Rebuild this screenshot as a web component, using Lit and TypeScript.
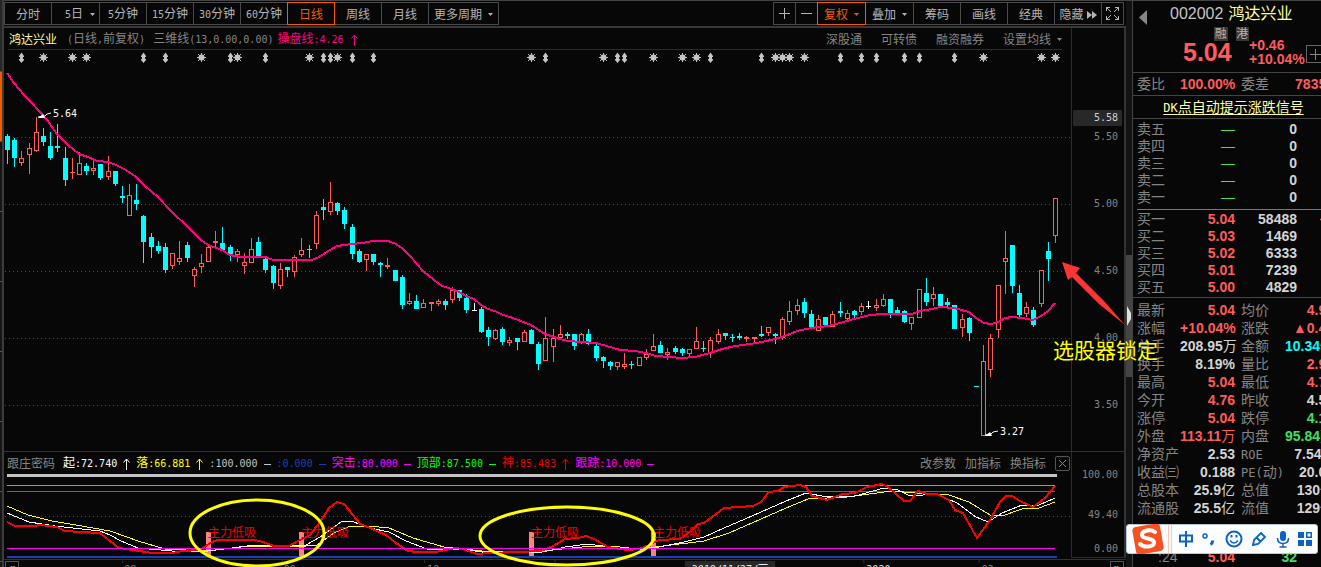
import { LitElement, html, svg, css } from "lit";
import { customElement } from "lit/decorators.js";
import { classMap } from "lit/directives/class-map.js";

type Kind = "r" | "c" | "w";
// x, high, low, body top, body bottom, kind
type Candle = [number, number, number, number, number, Kind];

const CANDLES: Candle[] = [
  [7,134,164,136,150,"c"],[14,138,167,140,158,"c"],[21,151,166,158,163,"r"],[29,143,174,148,155,"r"],
  [36,117,152,132,151,"r"],[43,128,146,136,142,"c"],[50,132,160,146,158,"c"],[57,124,152,146,148,"c"],
  [65,147,186,158,180,"c"],[72,158,179,172,173,"r"],[79,152,175,163,175,"r"],[86,163,175,166,171,"c"],
  [93,159,175,168,171,"r"],[100,164,180,164,178,"c"],[108,156,180,171,177,"r"],[115,171,186,171,184,"c"],
  [122,186,203,196,198,"c"],[129,184,216,195,216,"r"],[136,184,210,200,204,"c"],[143,215,263,216,242,"c"],
  [151,233,258,237,247,"c"],[158,241,254,246,251,"c"],[165,243,273,247,270,"c"],[172,253,269,253,266,"r"],
  [179,241,265,258,262,"r"],[187,242,262,245,258,"c"],[194,267,287,269,276,"r"],[201,254,273,263,267,"r"],
  [208,245,262,247,262,"r"],[215,231,248,241,243,"r"],[222,227,250,243,250,"c"],[230,245,261,247,254,"c"],
  [237,249,262,251,255,"r"],[244,253,274,262,266,"r"],[251,238,263,249,263,"r"],[258,237,256,242,256,"c"],
  [265,257,273,259,270,"c"],[273,265,289,266,283,"c"],[280,263,289,269,286,"r"],[287,267,277,267,270,"c"],
  [294,255,277,257,272,"r"],[301,238,257,250,255,"r"],[309,245,258,249,250,"c"],[316,211,249,215,244,"r"],
  [323,199,220,207,210,"c"],[330,182,215,202,212,"r"],[337,202,215,203,211,"c"],[344,207,229,210,224,"c"],
  [352,224,259,227,254,"c"],[359,249,263,251,262,"c"],[366,254,271,254,260,"r"],[373,254,265,254,262,"c"],
  [380,262,277,263,265,"c"],[387,258,269,265,267,"r"],[395,270,281,270,281,"c"],[402,275,309,277,305,"c"],
  [409,293,305,301,304,"r"],[416,295,309,301,309,"c"],[423,299,308,303,308,"r"],[431,302,311,302,304,"r"],
  [438,299,306,301,304,"r"],[445,299,310,301,305,"c"],[452,287,303,290,300,"r"],[459,290,301,290,298,"c"],
  [466,294,313,298,310,"c"],[474,303,311,310,311,"w"],[481,307,333,309,332,"c"],[488,327,346,330,337,"c"],
  [495,329,340,330,339,"r"],[502,327,345,329,342,"c"],[509,337,346,340,343,"r"],[517,338,350,338,342,"c"],
  [524,330,342,332,342,"r"],[531,329,344,330,344,"c"],[538,342,370,344,364,"c"],[545,317,361,338,361,"r"],
  [553,329,362,338,347,"r"],[560,325,338,334,338,"r"],[567,332,339,334,336,"c"],[574,334,350,334,346,"c"],
  [581,333,344,334,343,"r"],[588,329,345,334,344,"c"],[596,344,361,346,358,"c"],[603,356,368,357,361,"c"],
  [610,361,370,362,366,"c"],[617,362,370,362,367,"r"],[624,353,369,364,367,"r"],[631,361,369,364,365,"c"],
  [639,357,366,357,366,"r"],[646,349,360,354,358,"r"],[653,334,351,346,351,"r"],[660,341,353,345,353,"c"],
  [667,348,360,352,355,"r"],[675,346,354,348,352,"c"],[682,348,356,349,353,"c"],[689,349,357,349,354,"r"],
  [696,327,349,341,349,"r"],[703,341,352,348,349,"c"],[710,337,358,340,353,"r"],[718,329,344,334,342,"r"],
  [725,333,340,333,336,"c"],[732,334,342,337,338,"c"],[739,333,340,336,338,"c"],[746,336,342,337,339,"r"],
  [754,337,342,337,339,"r"],[761,326,337,334,336,"c"],[768,327,336,327,333,"r"],[775,333,344,334,336,"c"],
  [782,317,340,319,338,"r"],[789,301,325,311,322,"r"],[797,299,315,305,311,"r"],[804,298,318,302,313,"c"],
  [811,310,329,314,329,"c"],[818,315,331,319,331,"r"],[825,317,326,317,325,"c"],[832,311,327,314,327,"r"],
  [840,302,317,311,313,"c"],[847,310,321,313,319,"r"],[854,310,318,311,315,"c"],[861,303,315,306,312,"r"],
  [868,301,309,306,307,"w"],[876,299,311,305,308,"r"],[883,294,307,299,306,"r"],[890,299,318,299,314,"c"],
  [897,307,314,310,314,"c"],[904,310,323,311,322,"c"],[911,317,330,317,324,"r"],[919,289,318,289,318,"r"],
  [926,278,306,293,302,"c"],[933,287,306,294,299,"r"],[940,294,307,294,307,"c"],[947,298,309,302,305,"c"],
  [954,305,329,305,329,"c"],[962,314,337,319,328,"r"],[969,317,341,318,333,"c"],[976,386,387,386,387,"c"],
  [983,345,436,361,436,"r"],[990,334,377,338,370,"r"],[998,285,338,285,330,"r"],[1005,231,294,258,262,"r"],
  [1012,245,293,245,286,"c"],[1019,285,317,293,315,"c"],[1026,302,317,307,314,"r"],[1033,307,327,310,325,"c"],
  [1041,270,307,270,304,"r"],[1048,242,281,251,259,"c"],[1055,198,243,198,236,"r"],
];

const TREND =
  "7,73 14,83 24,95 30,101 40,112 47,120 57,134 68,145 79,154 88,157 97,161 108,162 116,165 126,170 136,177 145,186 158,197 172,212 187,226 201,240 208,245 222,250 230,255 240,257 265,257 273,260 312,260 319,257 330,250 337,246 344,245 362,243 373,241 388,241 396,244 403,249 410,256 423,271 434,280 442,286 452,289 459,292 466,296 474,299 481,305 488,309 495,311 503,315 513,318 531,325 545,334 560,339 568,341 582,342 596,343 610,347 620,350 635,351 646,353 656,356 670,357 682,358 695,357 710,353 722,349 735,346 750,344 762,342 775,339 785,336 797,331 811,328 828,326 840,323 854,319 870,315 882,314 912,314 920,311 932,309 940,307 954,308 969,312 976,318 984,323 991,324 998,322 1005,318 1012,317 1022,318 1033,320 1041,316 1048,311 1055,303";

const RED =
  "7,522 15,526 33,526 41,525 57,527 65,531 81,532 100,533 110,541 119,548 133,550 152,553 172,553 183,551 200,550 210,543 217,540 255,540 263,542 274,546 289,546 300,540 310,535 320,522 329,508 337,502 344,504 353,515 360,524 368,527 377,531 386,535 396,543 408,551 417,552 436,552 455,548 463,549 477,554 489,553 517,552 541,551 553,546 565,539 578,538 586,536 594,539 608,547 627,550 639,549 649,545 659,540 680,539 692,530 698,524 704,523 724,508 753,506 761,502 769,492 778,491 784,487 800,485 806,487 812,496 827,500 843,494 855,493 867,487 882,484 888,487 904,501 910,501 918,491 927,494 937,494 949,500 955,510 963,513 977,538 990,520 1000,502 1006,496 1012,496 1020,501 1033,507 1045,498 1055,486";
const WHITE =
  "7,513 29,522 55,526 100,531 110,535 121,541 138,548 172,551 200,552 224,549 255,545 286,546 306,545 320,537 341,522 351,521 370,528 389,532 406,541 427,549 461,549 489,553 543,552 565,547 588,544 610,547 635,550 659,547 684,542 704,537 724,528 745,519 761,512 786,501 806,493 827,497 855,496 884,488 898,490 910,496 937,494 957,503 976,517 988,522 1002,513 1022,505 1039,505 1055,498";
const YELLOW =
  "7,506 28,515 52,521 76,525 110,531 138,541 165,549 207,551 241,547 269,546 296,547 317,545 334,533 348,527 368,526 389,528 413,538 444,547 482,551 543,551 582,547 610,546 639,549 663,546 704,541 729,533 761,519 786,508 808,499 847,497 892,491 916,493 949,495 969,502 990,515 1002,516 1022,509 1039,508 1055,502";

const STARS = [43,72,86,201,237,309,337,531,603,653,682,696,775,782,789,804,983,1041,1055];
const DIAMONDS = [21,143,165,230,265,323,330,352,373,545,617,624,710,761,840,861,876,904,919,954];

/** Sets runs of half-width characters in the narrow monospace face. */
const mixed = (text: string) =>
  text
    .split(/([\x20-\x7e]+)/)
    .filter((part) => part)
    .map((part) => (/^[\x20-\x7e]/.test(part) ? html`<span class="n">${part}</span>` : part));

/** Keeps a trailing unit such as 万 in the regular weight. */
const amount = (text: string) => {
  const m = /^(.*?)([万亿]?)$/.exec(text)!;
  return html`${m[1]}<span class="unit">${m[2]}</span>`;
};

const base = css`
  * { box-sizing: border-box; }
  .n { font-family: "DejaVu Sans Mono", "Liberation Mono", monospace; font-size: var(--half, 10px); }
  svg { display: block; }
  button {
    margin: 0; padding: 0; border: 0; background: none; color: inherit;
    font: inherit; white-space: nowrap; cursor: pointer;
  }
  .caret { width: 5px; height: 3px; fill: currentColor; }
`;

const caret = html`<svg class="caret" viewBox="0 0 5 3"><path d="M0 0h5L2.5 3z" /></svg>`;

@customElement("top-toolbar")
class TopToolbar extends LitElement {
  static styles = [base, css`
    :host {
      display: flex; justify-content: space-between; height: 28px; padding: 1px 2px 1px 0;
      border-top: 1px solid #444; border-bottom: 2px solid #383838; color: #b4b4b4;
    }
    .group { display: flex; }
    button {
      display: flex; align-items: center; justify-content: center; gap: 6px;
      width: 48px; height: 23px; margin-right: -1px; padding-top: 2px; border: 1px solid #4a4a4a;
    }
    .group > :last-child { margin-right: 0; }
    .drop { width: 49px; }
    .day { gap: 7px; padding-left: 9px; }
    .more { width: 71px; }
    .small { width: 23px; padding-top: 0; }
    .hide { gap: 3px; }
    .active { border-color: #f85a00; color: #f85a00; z-index: 1; }
    .line { fill: none; stroke: currentColor; shape-rendering: crispEdges; }
    .fill { fill: currentColor; }
  `];
  render() {
    const periods = ["15分钟", "30分钟", "60分钟", "日线", "周线", "月线"];
    return html`
      <div class="group">
        <button>分时</button>
        <button class="drop day"><span>${mixed("5日")}</span>${caret}</button>
        <button><span>${mixed("5分钟")}</span></button>
        ${periods.map((p) => html`<button class=${classMap({ active: p === "日线" })}><span>${mixed(p)}</span></button>`)}
        <button class="more">更多周期${caret}</button>
      </div>
      <div class="group">
        <button class="small" aria-label="放大"><svg class="line" width="11" height="11"><path d="M0 5.5H11M5.5 0V11" /></svg></button>
        <button class="small" aria-label="缩小"><svg class="line" width="11" height="11"><path d="M0 5.5H11" /></svg></button>
        <button class="drop active">复权${caret}</button>
        <button class="drop">叠加${caret}</button>
        <button>筹码</button><button>画线</button><button>经典</button>
        <button class="hide">隐藏<svg class="fill" width="10" height="8"><path d="M0 0L5 4L0 8zM5 0L10 4L5 8z" /></svg></button>
        <button class="small" aria-label="全屏"><svg class="line" width="13" height="13"><path d="M.5 4V.5H4M9 .5H12.500V4M.5 9V12.500H4M9 12.500H12.500V9M1 1L5 5M12 1L8 5M1 12L5 8M12 12L8 8" /></svg></button>
      </div>`;
  }
}

@customElement("price-chart")
class PriceChart extends LitElement {
  static styles = [base, css`
    :host { display: grid; grid-template-columns: minmax(0, 1fr) 55px; height: 423px; }
    .info {
      display: flex; align-items: center; gap: 10px; height: 22px; margin: 0 9px 0 4px; padding: 2px 0 0 1px;
      border-bottom: 1px solid #2c2c2c; color: #858585;
    }
    .info .name { color: #ffffa0; }
    .info .param { margin-right: -6px; margin-left: -2px; }
    .trend { color: #ff0080; display: flex; align-items: center; gap: 7px; }
    .links { display: flex; gap: 19px; margin-left: auto; }
    .links button { display: flex; align-items: center; gap: 6px; }
    .plot { width: 100%; height: 401px; }
    .axis {
      display: flex; flex-direction: column; gap: 53px; padding-top: 82px;
      border-left: 1px solid #2c2c2c; border-right: 2px solid #333; color: #858585;
      text-align: right; line-height: 14px;
    }
    .axis span { padding-right: 6px; }
    .first { display: flex; flex-direction: column; gap: 4px; }
    .axis .tag { margin: 0 2px 0 1px; padding-right: 4px; line-height: 16px; background: #282828; color: #d0d0d0; border-radius: 1px; }
    .crisp { shape-rendering: crispEdges; }
    .grid { stroke: #4c4c4c; stroke-dasharray: 1 3; fill: none; }
    .r { fill: #070707; stroke: #ff5c5c; }
    .c { fill: #00ffff; stroke: #00ffff; }
    .w { fill: #fff; stroke: #fff; }
    .ma { fill: none; stroke: #ff0080; stroke-width: 2; stroke-linejoin: round; shape-rendering: crispEdges; }
    .note { fill: #fff; }
    .leader { stroke: #fff; fill: none; }
    .event { fill: #c4c4c4; }
    .ray { stroke: #c4c4c4; fill: none; }
  `];
  private candle([x, hi, lo, top, bottom, kind]: Candle) {
    const cx = x + 0.5;
    return svg`<g class=${kind}>
      <path d="M${cx} ${hi}V${lo}" />
      <rect x=${x - 1.5} y=${top + 0.5} width="4" height=${Math.max(bottom - top - 1, 0.01)} />
    </g>`;
  }
  render() {
    return html`
      <div>
        <div class="info">
          <span class="name">鸿达兴业</span>
          <span>${mixed("(日线,前复权)")}</span>
          <span class="param">${mixed("三维线(13,0.00,0.00)")}</span>
          <span class="trend"><span>${mixed("操盘线:4.26")}</span>
            <svg width="7" height="12" fill="none" stroke="currentColor"><path d="M3.5 12V1M.5 4.500L3.500 1L6.500 4.500" /></svg>
          </span>
          <div class="links">
            <button>深股通</button><button>可转债</button><button>融资融券</button><button>设置均线${caret}</button>
          </div>
        </div>
        <svg class="plot" viewBox="4 50 1067 401" preserveAspectRatio="none">
          ${DIAMONDS.map((x) => svg`<path class="event" d="M${x + 0.5} 52.500L${x + 3} 56V57H${x + 2}V59H${x + 3}V60L${x + 0.5} 63L${x - 2} 60V59H${x - 1}V57H${x - 2}V56z" />`)}
          ${STARS.map((x) => svg`<circle class="event" cx=${x + 0.5} cy="57.500" r="3" />
            <path class="ray" d="M${x - 4} 57.500H${x + 5}M${x + 0.5} 53V62M${x - 3} 54L${x + 4} 61M${x + 4} 54L${x - 3} 61" />`)}
          <g class="crisp">
            ${[137, 204, 271, 338, 405].map((y) => svg`<path class="grid" d="M5 ${y + 0.5}H1071" />`)}
            ${CANDLES.map((c) => this.candle(c))}
          </g>
          <polyline class="ma" points=${TREND} />
          <path class="leader" d="M38 117L45 116L47 114L51 113M985 435L991 434L993 432L998 431" />
          <path class="note" d="M38 118L43 114L45 118zM985 436L990 432L992 436z" />
          <text class="note n" x="53" y="117">5.64</text>
          <text class="note n" x="1000" y="435">3.27</text>
        </svg>
      </div>
      <div class="axis">
        <div class="first"><span class="tag n">5.58</span><span class="n">5.50</span></div>
        ${["5.00", "4.50", "4.00", "3.50"].map((v) => html`<span class="n">${v}</span>`)}
      </div>`;
  }
}

@customElement("indicator-chart")
class IndicatorChart extends LitElement {
  static styles = [base, css`
    :host { display: block; }
    .pane { display: grid; grid-template-columns: minmax(0, 1fr) 55px; height: 108px; border-top: 1px solid #333; }
    .legend { display: flex; align-items: center; gap: 6px; height: 22px; padding: 1px 1px 0 3px; }
    .legend svg { width: 7px; height: 12px; fill: none; stroke: currentColor; }
    .item { display: flex; align-items: center; gap: 6px; }
    .title { margin-right: 2px; color: #858585; }
    .white { color: #fff; } .yellow { color: #ff0; } .grey { color: #c4c4c4; } .blue { color: #1440c0; }
    .magenta { color: #f0f; } .green { color: #0f0; } .red { color: #f00000; }
    .tools { display: flex; align-items: center; gap: 9px; margin-left: auto; color: #858585; }
    .tools .close { width: 15px; height: 15px; display: grid; place-items: center; border: 1px solid #555; border-radius: 2px; }
    .tools .close svg { width: 9px; height: 9px; }
    .plot { width: 100%; height: 85px; overflow: visible; position: relative; z-index: 1; }
    .axis {
      display: flex; flex-direction: column; height: 106px; padding: 16px 6px 0 0; line-height: 14px; text-align: right;
      border-left: 1px solid #2c2c2c; border-right: 2px solid #333; border-bottom: 1px solid #2c2c2c; color: #858585;
    }
    .mid { margin: 26px 0 20px; }
    .crisp { shape-rendering: crispEdges; }
    .curve { fill: none; }
    .signal { fill: #f00000; font-size: 12px; }
    .bar { fill: #ff8080; }
    .dates { display: flex; position: relative; justify-content: space-between; height: 24px; border-top: 1px solid #333; color: #858585; }
    .dates button { width: 14px; height: 14px; margin: 1px 2px 0 1px; border: 1px solid #555; line-height: 10px; color: #c4c4c4; }
    .scale { flex: 1; height: 24px; min-width: 0; }
    .scale text { fill: #858585; }
    .scale .year { fill: #e8e8e8; }
    .tick { stroke: #333; }
  `];
  private item(color: string, text: string, up: boolean) {
    return html`<span class="item ${color}"><span>${mixed(text)}</span>
      <svg>${up ? svg`<path d="M3.5 12V1M.5 4.500L3.500 1L6.500 4.500" />` : svg`<path d="M0 6.500H7" />`}</svg></span>`;
  }
  render() {
    return html`
      <div class="pane">
        <div>
          <div class="legend">
            <span class="title">跟庄密码</span>
            ${this.item("white", "起:72.740", true)} ${this.item("yellow", "落:66.881", true)}
            ${this.item("grey", ":100.000", false)} ${this.item("blue", ":0.000", false)}
            ${this.item("magenta", "突击:80.000", false)} ${this.item("green", "顶部:87.500", false)}
            ${this.item("red", "神:85.483", true)} ${this.item("magenta", "跟踪:10.000", false)}
            <div class="tools">
              <button>改参数</button><button>加指标</button><button>换指标</button>
              <button class="close" aria-label="关闭"><svg><path d="M1 1L8 8M8 1L1 8" /></svg></button>
            </div>
          </div>
          <svg class="plot" viewBox="4 474 1067 85" preserveAspectRatio="none">
            <g class="crisp curve">
              <path stroke="#4c4c4c" stroke-dasharray="1 3" d="M5 516.500H1071" />
              <path stroke="#c4c4c4" stroke-width="3" d="M7 475.500H1057" />
              <path stroke="#00ff00" d="M7 485.500H1055" />
              <path stroke="#ff00ff" d="M7 491.500H1055" />
            </g>
            ${[206, 299, 529, 651].map((x) => svg`<rect class="bar" x=${x} y="532" width="5" height="24" />`)}
            <g class="crisp curve">
              <polyline stroke="#ffff00" points=${YELLOW} />
              <polyline stroke="#ffffff" points=${WHITE} />
              <polyline stroke="#ff0000" stroke-width="2" points=${RED} />
            </g>
            <g class="crisp curve">
              <path stroke="#ff00ff" d="M7 548.500H1055" />
              <path stroke="#1440c0" stroke-width="2" d="M7 557H1057" />
            </g>
            ${[208, 301, 531, 653].map((x) => svg`<text class="signal" x=${x} y="537">主力低吸</text>`)}
            <g class="curve" stroke="#ffff00" stroke-width="3">
              <ellipse cx="257" cy="533" rx="67" ry="33" />
              <ellipse cx="567" cy="536" rx="87" ry="29" />
            </g>
          </svg>
        </div>
        <div class="axis"><span class="n">100.00</span><span class="n mid">49.40</span><span class="n">0.00</span></div>
      </div>
      <div class="dates">
        <button aria-label="向前">«</button>
        <svg class="scale" viewBox="21 560 1085 24" preserveAspectRatio="none">
          <path class="tick" d="M122.500 560v3M281.500 560v3M423.500 560v3M553.500 560v3M703.500 560v3M861.500 560v3M976.500 560v3" />
          <rect x="683" y="561" width="90" height="16" fill="#282828" />
          <text class="n" x="124" y="573">08</text><text class="n" x="283" y="573">09</text><text class="n" x="426" y="573">10</text>
          <text class="n year" x="690" y="573">2019/11/27/</text><text class="year" x="755" y="574">三</text>
          <text class="n year" x="864" y="573">2020</text><text class="n" x="979" y="573">02</text>
        </svg>
        <button aria-label="向后">»</button>
      </div>`;
  }
}

@customElement("quote-panel")
class QuotePanel extends LitElement {
  static styles = [base, css`
    :host {
      display: block; overflow: hidden; border-left: 1px solid #444; --half: 12px;
      font-size: 14px; color: #858585;
    }
    .n { line-height: 1; }
    .inner { width: 201px; }
    .head { height: 72px; border-top: 1px solid #444; }
    .title { display: flex; align-items: center; height: 25px; padding-left: 6px; font-size: 16px; color: #c4c4c4; }
    .title button { margin: 8px 23px 0 0; }
    .title span { margin-left: 5px; color: #ffffa0; }
    .quote { display: grid; grid-template-columns: 66px 57px auto; justify-content: start; padding-left: 50px; color: #ff5c5c; font-weight: bold; }
    .tags { display: flex; gap: 8px; padding: 1px 0 0 31px; }
    .tags span { width: 14px; background: #363636; color: #b4b4b4; font-size: 12px; font-weight: normal; line-height: 14px; text-align: center; }
    .last { font-size: 25px; line-height: 22px; }
    .change { padding-top: 12px; line-height: 14px; }
    .add { width: 18px; height: 18px; margin-top: 19px; border: 1px solid #666; display: grid; place-items: center; color: #858585; }
    table { width: 100%; border-collapse: collapse; table-layout: fixed; }
    td, th { padding: 0; font-weight: normal; text-align: left; white-space: nowrap; line-height: 17px; }
    td { text-align: right; font-weight: bold; color: #d4d4d4; }
    th { padding-left: 4px; }
    .unit { font-weight: normal; }
    .ratio { border-top: 1px solid #444; border-bottom: 1px solid #444; }
    .ratio th, .ratio td { line-height: 22px; }
    .tip { height: 23px; border-bottom: 1px solid #444; line-height: 22px; text-align: center; }
    .tip a { color: #ffffa0; text-underline-offset: 2px; }
    .sell { padding: 2px 0 3px; }
    .buy { margin-left: 4px; padding-top: 1px; border-top: 1px solid #777; }
    .buy table { margin-left: -4px; width: 201px; }
    .stats { margin-top: 1px; padding-top: 3px; border-top: 1px solid #444; }
    .stats td, .stats th { line-height: 18px; }
    .red { color: #ff5c5c; } .green { color: #40e060; } .cyan { color: #00ffff; }
    .c1 { width: 53px; } .c2 { width: 49px; } .c3 { width: 62px; } .c4 { width: 37px; }
    .s1 { width: 47px; } .s2 { width: 55px; } .s3 { width: 44px; } .s4 { width: 55px; }
    .stats th:nth-child(3), .ratio th:nth-child(3) { padding-left: 6px; }
    .ticks { padding-top: 32px; }
    .ticks th { padding-left: 25px; }
  `];
  render() {
    const stats: [string, string, string, string, string, string][] = [
      ["最新", "5.04", "red", "均价", "4.95", "red"],
      ["涨幅", "+10.04%", "red", "涨跌", "▲0.46", "red"],
      ["总手", "208.95万", "", "金额", "10.34亿", "cyan"],
      ["换手", "8.19%", "", "量比", "2.95", "red"],
      ["最高", "5.04", "red", "最低", "4.73", "red"],
      ["今开", "4.76", "red", "昨收", "4.58", ""],
      ["涨停", "5.04", "red", "跌停", "4.12", "green"],
      ["外盘", "113.11万", "red", "内盘", "95.84万", "green"],
      ["净资产", "2.53", "", "ROE", "7.54%", ""],
      ["收益㈢", "0.188", "", "PE(动)", "20.06", ""],
      ["总股本", "25.9亿", "", "总值", "130亿", ""],
      ["流通股", "25.5亿", "", "流值", "129亿", ""],
    ];
    const bids = [["买一", "5.04", "58488", "—"], ["买二", "5.03", "1469", ""], ["买三", "5.02", "6333", ""], ["买四", "5.01", "7239", ""], ["买五", "5.00", "4829", ""]];
    const book = html`<colgroup><col class="c1" /><col class="c2" /><col class="c3" /><col class="c4" /></colgroup>`;
    const pairs = html`<colgroup><col class="s1" /><col class="s2" /><col class="s3" /><col class="s4" /></colgroup>`;
    return html`<div class="inner">
      <div class="head">
        <div class="title">
          <button aria-label="返回"><svg width="8" height="15"><path fill="#858585" d="M8 0V15L0 7.500z" /></svg></button>
          002002<span>鸿达兴业</span>
        </div>
        <div class="quote">
          <div><div class="tags"><span>融</span><span>港</span></div><div class="last">5.04</div></div>
          <div class="change">+0.46<br />+10.04%</div>
          <button class="add" aria-label="添加"><svg width="11" height="11" stroke="currentColor"><path d="M0 5.500H11M5.500 0V11" /></svg></button>
        </div>
      </div>
      <div class="ratio"><table>${pairs}<tr><th>委比</th><td class="red">100.00%</td><th>委差</th><td class="red">78353</td></tr></table></div>
      <div class="tip"><a href="#signal">${mixed("DK点自动提示涨跌信号")}</a></div>
      <div class="sell"><table>${book}
        ${["卖五", "卖四", "卖三", "卖二", "卖一"].map((s) => html`<tr><th>${s}</th><td class="green unit">—</td><td>0</td><td></td></tr>`)}
      </table></div>
      <div class="buy"><table>${book}
        ${bids.map((b) => html`<tr><th>${b[0]}</th><td class="red">${b[1]}</td><td>${b[2]}</td><td class="red">${b[3]}</td></tr>`)}
      </table></div>
      <div class="stats"><table>${pairs}
        ${stats.map((s) => html`<tr><th>${s[0]}</th><td class=${s[2]}>${amount(s[1])}</td><th>${mixed(s[3])}</th><td class=${s[5]}>${amount(s[4])}</td></tr>`)}
      </table></div>
      <div class="ticks"><table>${book}<tr><th>:24</th><td class="red">5.04</td><td class="green">32</td><td></td></tr></table></div>
    </div>`;
  }
}

@customElement("ime-bar")
class ImeBar extends LitElement {
  static styles = [base, css`
    :host {
      display: flex; align-items: center; width: 192px; height: 30px; padding: 0 5px; border-radius: 3px;
      background: #fcfdfe; border: 1px solid #b8c8d0; color: #0a62c4;
    }
    .logo { margin-right: 4px; flex: none; }
    .split { width: 4px; height: 28px; margin-right: 6px; border: 1px solid #ffc8b0; border-width: 0 1px; }
    .icons { flex: 1; display: flex; align-items: center; justify-content: space-between; }
    .icons svg { fill: none; stroke: currentColor; stroke-width: 2; }
  `];
  render() {
    return html`
      <svg class="logo" width="32" height="30" viewBox="0 0 32 30">
        <rect x="2" y="1" width="28" height="28" rx="4" fill="#f85020" transform="rotate(-10 16 15)" />
        <path d="M23 8C19 5 10 6 10 11C10 16 22 13 22 18.500C22 23 12 24 8 20" fill="none" stroke="#fff" stroke-width="4" stroke-linecap="round" />
      </svg>
      <span class="split"></span>
      <div class="icons">
        <button aria-label="中文"><svg width="16" height="16"><path d="M2 4.500H14V10.500H2zM8 0V16" /></svg></button>
        <button aria-label="标点"><svg width="14" height="14"><circle cx="3" cy="4" r="2" stroke-width="1.500" /><path d="M10.500 8.500v1q0 2-2 3" stroke-width="3" /></svg></button>
        <button aria-label="表情"><svg width="18" height="18"><circle cx="9" cy="9" r="7.500" /><path d="M5 10.500q4 5 8 0" stroke-width="1.500" /><path d="M6.500 5v2.500M11.500 5v2.500" /></svg></button>
        <button aria-label="手写"><svg width="16" height="16"><path d="M2 14L3 9L10 2L14 6L7 13zM6 7L10 11" stroke-width="1.800" /></svg></button>
        <button aria-label="语音"><svg width="14" height="17"><rect x="5" y="1" width="4" height="8" rx="2" fill="currentColor" /><path d="M1.500 7q0 5.500 5.500 5.500t5.500-5.500M7 12.500V16M3.500 16h7" stroke-width="1.500" /></svg></button>
        <button aria-label="工具箱"><svg width="14" height="14"><path stroke="none" fill="currentColor" d="M0 0h6v6h-6zM0 8h6v6h-6zM8 8h6v6h-6z" /><rect x="8.750" y=".75" width="4.500" height="4.500" stroke-width="1.500" /></svg></button>
      </div>`;
  }
}

@customElement("app-root")
class AppRoot extends LitElement {
  static styles = [base, css`
    :host {
      display: grid; grid-template-columns: 4px minmax(0, 1fr) 6px 189px; position: relative; height: 100vh; overflow: hidden;
      background: #070707; font: 12px/14px "Liberation Sans", "Noto Sans CJK SC", sans-serif;
    }
    .edge { border-right: 2px solid #3c3c3c; background: #161616; overflow: hidden; }
    .tab { height: 70px; border-bottom: 1px solid #555; }
    .tab:first-child { height: 72px; background: #262626; }
    .tab.on { background: #f85a00; }
    .strip { background: #121212; border-top: 1px solid #444; }
    .thumb { display: grid; place-items: center; width: 100%; height: 122px; margin-top: 254px; background: #444; }
    .caption { position: absolute; left: 1053px; top: 339px; color: #ff0; font-size: 21px; line-height: 24px; white-space: nowrap; }
    .pointer { position: absolute; left: 1060px; top: 260px; }
    ime-bar { position: absolute; left: 1126px; top: 524px; }
  `];
  render() {
    return html`
      <div class="edge">
        ${[0, 1, 2, 3, 4, 5, 6, 7].map((i) => html`<div class=${classMap({ tab: true, on: i === 1 })}></div>`)}
      </div>
      <main><top-toolbar></top-toolbar><price-chart></price-chart><indicator-chart></indicator-chart></main>
      <div class="strip"><button class="thumb" aria-label="收起"><svg width="4" height="20"><path fill="#e0e0e0" d="M0 0L4 7V13L0 20z" /></svg></button></div>
      <quote-panel></quote-panel>
      <svg class="pointer" width="66" height="66"><path fill="#ff3434" d="M2 2L20 8L16 13L44 41L65 65L39 44L12 17L8 20z" /></svg>
      <div class="caption">选股器锁定</div>
      <ime-bar></ime-bar>`;
  }
}
